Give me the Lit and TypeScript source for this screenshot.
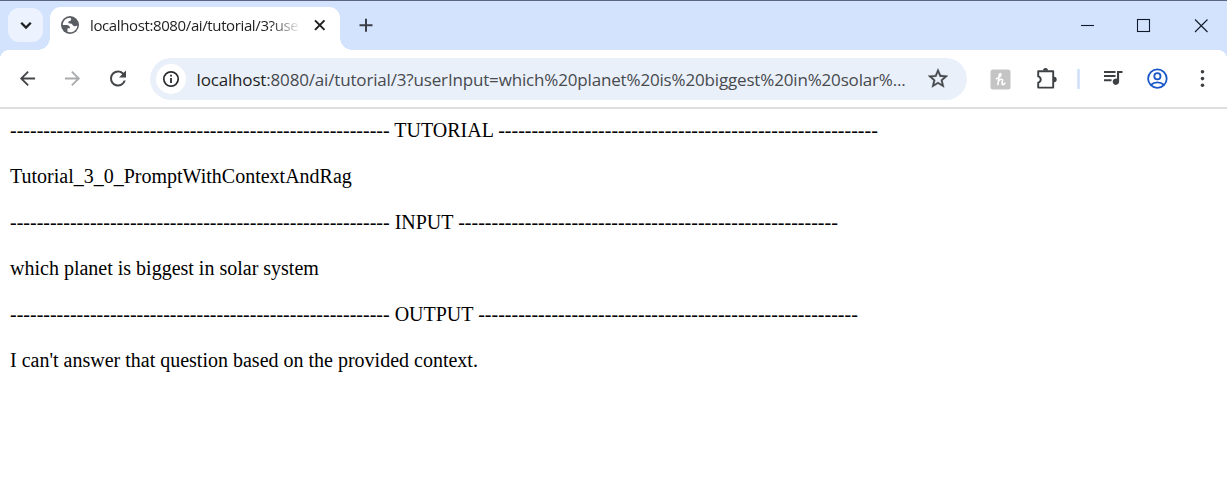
import { LitElement, html, css, svg } from "lit";
import { customElement } from "lit/decorators.js";

const RULE = "-".repeat(57);

@customElement("tab-strip")
class TabStrip extends LitElement {
  static styles = css`
    :host {
      display: flex;
      box-sizing: border-box;
      height: 50px;
      border-top: 1px solid #5b6580;
      background: #d3e3fd;
      font-family: "Open Sans", "Noto Sans", sans-serif;
    }
    svg { display: block; flex: none; }
    .search {
      width: 35px;
      height: 34px;
      margin: 7px 0 0 8px;
      border-radius: 11px;
      background: #ecf2fe;
    }
    .flare { align-self: flex-end; width: 12px; height: 12px; }
    .left { margin-left: -5px; background: radial-gradient(circle at 0 0, transparent 11.5px, #fff 12px); }
    .right { background: radial-gradient(circle at 100% 0, transparent 11.5px, #fff 12px); }
    .tab {
      display: flex;
      align-items: flex-start;
      box-sizing: border-box;
      width: 290px;
      height: 43px;
      margin-top: 6px;
      border-radius: 11px 11px 0 0;
      background: #fff;
    }
    .globe { margin: 8px 0 0 10px; }
    .title {
      flex: none;
      width: 209px;
      margin: 7px 0 0 10px;
      overflow: hidden;
      white-space: nowrap;
      font-size: 15px;
      line-height: 22px;
      letter-spacing: -0.38px;
      color: #1f1f1f;
      -webkit-mask-image: linear-gradient(to right, #000 180px, transparent 211px);
    }
    .close { margin: 10px 0 0 14px; }
    .plus { margin: 15px 0 0 7px; }
    .window { display: flex; margin-left: auto; }
  `;
  render() {
    return html`
      <div class="search">
        <svg width="35" height="34"><path d="M13.2 14.7 18 19.5l4.8-4.8" fill="none" stroke="#1f1f1f" stroke-width="2.3" /></svg>
      </div>
      <div class="flare left"></div>
      <div class="tab">
        <svg class="globe" width="20" height="20" viewBox="0 0 20 20">
          <circle cx="10" cy="10" r="9" fill="#5a5e63" />
          <path d="M10.4 2.7c-4.5 0-7.6 3.2-7.6 7.2h3.8c2.1 0 3.5 1.4 3.5 3.4h-2.6v3.5c.8.3 1.6.5 2.4.5 4.2 0 7.3-3.1 7.4-6.9-1.1.8-2.3 1-3.4.6-1.3-.4-1.4-1.9-2.4-2.3-1-.5-2.8.1-3.2-1-.4-1.5 2.3-1.7 2.8-2.7.4-.8-.1-1.4-.7-2.3z" fill="#fff" />
        </svg>
        <div class="title">localhost:8080/ai/tutorial/3?use</div>
        <svg class="close" width="16" height="16"><path d="M2 3.4l9.5 9.5M11.5 3.4 2 12.9" stroke="#1f1f1f" stroke-width="2" /></svg>
      </div>
      <div class="flare right"></div>
      <svg class="plus" width="18" height="18"><path d="M.5 9.3h13M7 2.8v13" stroke="#3b3f45" stroke-width="2" /></svg>
      <div class="window">
        <svg width="147" height="49" fill="none" stroke="#111a2a" stroke-width="1.1">
          <path d="M1 24.5h13" />
          <rect x="57.5" y="18.5" width="12" height="12" />
          <path d="M115 18.5l12.5 12.5M127.5 18.5 115 31" />
        </svg>
      </div>
    `;
  }
}

const icons = {
  back: svg`<path d="M20 11H7.83l5.59-5.59L12 4l-8 8 8 8 1.41-1.41L7.83 13H20z" />`,
  forward: svg`<path d="M4 11h12.17l-5.59-5.59L12 4l8 8-8 8-1.41-1.41L16.17 13H4z" />`,
  reload: svg`<path d="M17.65 6.35A7.96 7.96 0 0 0 12 4a8 8 0 1 0 7.73 10h-2.08A6 6 0 1 1 12 6c1.66 0 3.14.69 4.22 1.78L13 11h7V4z" />`,
  star: svg`<path d="M22 9.24l-7.19-.62L12 2 9.19 8.63 2 9.24l5.46 4.73L5.82 21 12 17.27 18.18 21l-1.63-7.03zM12 15.4l-3.76 2.27 1-4.28-3.32-2.88 4.38-.38L12 6.1l1.71 4.04 4.38.38-3.32 2.88 1 4.28z" />`,
};

@customElement("tool-bar")
class ToolBar extends LitElement {
  static styles = css`
    :host { display: block; height: 59px; background: #d3e3fd; }
    svg { display: block; flex: none; }
    .bar {
      display: flex;
      align-items: center;
      box-sizing: border-box;
      height: 59px;
      padding: 0 0 1px 19px;
      border-bottom: 2px solid #dededf;
      background: radial-gradient(circle at 10px 10px, #fff 10px, transparent 10.5px) 0 0 / 10px 10px no-repeat,
        radial-gradient(circle at 0 10px, #fff 10px, transparent 10.5px) 100% 0 / 10px 10px no-repeat,
        linear-gradient(#fff, #fff) 10px 0 / calc(100% - 20px) 10px no-repeat,
        linear-gradient(#fff, #fff) 0 10px / 100% 49px no-repeat;
      fill: #44474a;
    }
    .nav { display: flex; width: 108px; justify-content: space-between; padding-top: 1px; }
    .off { fill: #a9abad; }
    .address {
      display: flex;
      align-items: center;
      box-sizing: border-box;
      width: 817px;
      height: 42px;
      margin: 2px 0 0 23px;
      padding-left: 6px;
      border-radius: 21px;
      background: #eaf0fa;
    }
    .info { width: 30px; height: 30px; border-radius: 50%; background: #fff; }
    .url {
      flex: none;
      width: 730px;
      margin: 1px 0 0 10.5px;
      white-space: nowrap;
      font: 17px/26px "Open Sans", "Noto Sans", sans-serif;
      letter-spacing: -0.165px;
      color: #474a4e;
    }
    .host { color: #1f1f1f; }
  `;
  render() {
    return html`
      <div class="bar">
        <div class="nav">
          <svg width="17" height="17" viewBox="3 3 18 18">${icons.back}</svg>
          <svg class="off" width="17" height="17" viewBox="3 3 18 18">${icons.forward}</svg>
          <svg width="18" height="18" viewBox="3 3.5 18 18">${icons.reload}</svg>
        </div>
        <div class="address">
          <div class="info">
            <svg width="30" height="30">
              <circle cx="15" cy="15" r="7.2" fill="none" stroke="#2b2d30" stroke-width="1.7" />
              <path d="M14.1 10.8h1.8v1.8h-1.8zM14.1 14h1.8v5h-1.8z" fill="#2b2d30" />
            </svg>
          </div>
          <div class="url"><span class="host">localhost</span>:8080/ai/tutorial/3?userInput=which%20planet%20is%20biggest%20in%20solar%...</div>
          <svg width="22" height="22" viewBox="1 1.5 22 22" stroke="#44474a" stroke-width=".3">${icons.star}</svg>
        </div>
        <svg width="260" height="56" viewBox="967 50 260 56">
          <rect x="990.5" y="69.5" width="20" height="20" rx="2.5" fill="#c4c4c4" />
          <path d="M996.3 78.6c2.6-.3 4.7-2.5 4.6-4.2-.1-1.2-1.4-.9-1.7.5l-1.3 9.8M998.6 81.2c1.2-2.4 4.2-2.7 3.9-.6-.3 1.5-1.1 4 .3 4 1 0 1.7-.8 2.1-1.5" fill="none" stroke="#fff" stroke-width="1.6" stroke-linecap="round" />
          <path d="M1038.2 71.2h15v16.4h-15v-4.9c1.7-.5 2.5-1.7 2.5-3.2s-.8-2.6-2.5-3.1z" fill="none" stroke="#3e4144" stroke-width="1.9" stroke-linejoin="round" />
          <path d="M1043 70.5a2.5 2.5 0 0 1 5 0zM1054 76.8a2.7 2.7 0 0 1 0 5.4z" fill="#3e4144" />
          <path d="M1078.5 69v20" stroke="#cfdff9" stroke-width="2.5" />
          <path d="M1104 72h11.5M1104 76h11.5M1104 80.3h7.5" stroke="#3e4144" stroke-width="1.9" fill="none" />
          <path d="M1117 71h5.5v2h-3.4v8.7a3.2 3.2 0 1 1-2.1-3z" fill="#3e4144" />
          <g fill="none" stroke="#1757c7" stroke-width="1.8">
            <circle cx="1157.4" cy="78.6" r="9.3" />
            <circle cx="1157.4" cy="76.3" r="3.1" />
            <path d="M1150.8 85c3.7-3.4 9.5-3.4 13.2 0" />
          </g>
          <g fill="#3e4144"><circle cx="1202.5" cy="71.8" r="1.8" /><circle cx="1202.5" cy="78.6" r="1.8" /><circle cx="1202.5" cy="85.3" r="1.8" /></g>
        </svg>
      </div>
    `;
  }
}

@customElement("app-root")
class AppRoot extends LitElement {
  static styles = css`
    :host { display: block; height: 477px; overflow: hidden; background: #fff; }
    .page {
      display: flex;
      flex-direction: column;
      gap: 23px;
      padding: 10px;
      font: 20px/23px "Liberation Serif", "Times New Roman", serif;
      color: #000;
      white-space: nowrap;
    }
  `;
  render() {
    return html`
      <tab-strip></tab-strip>
      <tool-bar></tool-bar>
      <main class="page">
        <div>${RULE} TUTORIAL ${RULE}</div>
        <div>Tutorial_3_0_PromptWithContextAndRag</div>
        <div>${RULE} INPUT ${RULE}</div>
        <div>which planet is biggest in solar system</div>
        <div>${RULE} OUTPUT ${RULE}</div>
        <div>I can't answer that question based on the provided context.</div>
      </main>
    `;
  }
}
